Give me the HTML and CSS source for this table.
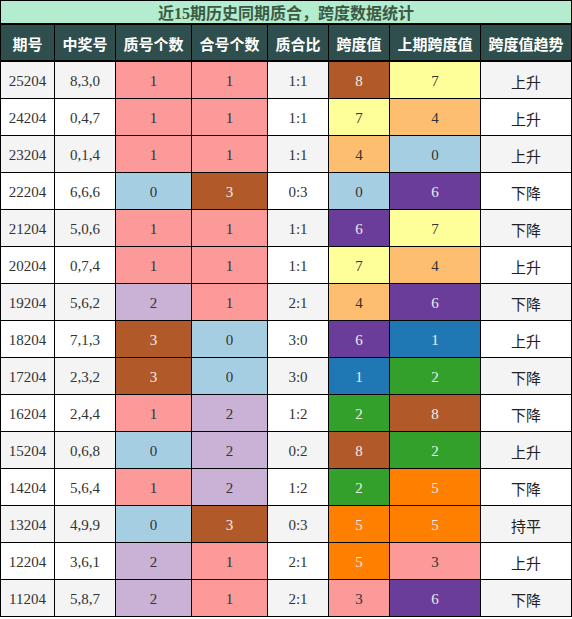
FILE: index.html
```html
<!DOCTYPE html>
<html lang="zh-CN">
<head>
<meta charset="utf-8">
<title>近15期历史同期质合，跨度数据统计</title>
<link rel="stylesheet" href="styles.css">
</head>
<body>
<div class="sheet">
  <div class="title">近15期历史同期质合，跨度数据统计</div>
  <div class="th">期号</div><div class="th">中奖号</div><div class="th">质号个数</div><div class="th">合号个数</div><div class="th">质合比</div><div class="th">跨度值</div><div class="th">上期跨度值</div><div class="th">跨度值趋势</div>

  <div class="td alt">25204</div><div class="td alt">8,3,0</div><div class="td n1">1</div><div class="td n1">1</div><div class="td alt">1:1</div><div class="td s8">8</div><div class="td s7">7</div><div class="td alt tr">上升</div>
  <div class="td">24204</div><div class="td">0,4,7</div><div class="td n1">1</div><div class="td n1">1</div><div class="td">1:1</div><div class="td s7">7</div><div class="td s4">4</div><div class="td tr">上升</div>
  <div class="td alt">23204</div><div class="td alt">0,1,4</div><div class="td n1">1</div><div class="td n1">1</div><div class="td alt">1:1</div><div class="td s4">4</div><div class="td s0">0</div><div class="td alt tr">上升</div>
  <div class="td">22204</div><div class="td">6,6,6</div><div class="td n0">0</div><div class="td n3">3</div><div class="td">0:3</div><div class="td s0">0</div><div class="td s6">6</div><div class="td tr">下降</div>
  <div class="td alt">21204</div><div class="td alt">5,0,6</div><div class="td n1">1</div><div class="td n1">1</div><div class="td alt">1:1</div><div class="td s6">6</div><div class="td s7">7</div><div class="td alt tr">下降</div>
  <div class="td">20204</div><div class="td">0,7,4</div><div class="td n1">1</div><div class="td n1">1</div><div class="td">1:1</div><div class="td s7">7</div><div class="td s4">4</div><div class="td tr">上升</div>
  <div class="td alt">19204</div><div class="td alt">5,6,2</div><div class="td n2">2</div><div class="td n1">1</div><div class="td alt">2:1</div><div class="td s4">4</div><div class="td s6">6</div><div class="td alt tr">下降</div>
  <div class="td">18204</div><div class="td">7,1,3</div><div class="td n3">3</div><div class="td n0">0</div><div class="td">3:0</div><div class="td s6">6</div><div class="td s1">1</div><div class="td tr">上升</div>
  <div class="td alt">17204</div><div class="td alt">2,3,2</div><div class="td n3">3</div><div class="td n0">0</div><div class="td alt">3:0</div><div class="td s1">1</div><div class="td s2">2</div><div class="td alt tr">下降</div>
  <div class="td">16204</div><div class="td">2,4,4</div><div class="td n1">1</div><div class="td n2">2</div><div class="td">1:2</div><div class="td s2">2</div><div class="td s8">8</div><div class="td tr">下降</div>
  <div class="td alt">15204</div><div class="td alt">0,6,8</div><div class="td n0">0</div><div class="td n2">2</div><div class="td alt">0:2</div><div class="td s8">8</div><div class="td s2">2</div><div class="td alt tr">上升</div>
  <div class="td">14204</div><div class="td">5,6,4</div><div class="td n1">1</div><div class="td n2">2</div><div class="td">1:2</div><div class="td s2">2</div><div class="td s5">5</div><div class="td tr">下降</div>
  <div class="td alt">13204</div><div class="td alt">4,9,9</div><div class="td n0">0</div><div class="td n3">3</div><div class="td alt">0:3</div><div class="td s5">5</div><div class="td s5">5</div><div class="td alt tr">持平</div>
  <div class="td">12204</div><div class="td">3,6,1</div><div class="td n2">2</div><div class="td n1">1</div><div class="td">2:1</div><div class="td s5">5</div><div class="td s3">3</div><div class="td tr">上升</div>
  <div class="td alt">11204</div><div class="td alt">5,8,7</div><div class="td n2">2</div><div class="td n1">1</div><div class="td alt">2:1</div><div class="td s3">3</div><div class="td s6">6</div><div class="td alt tr">下降</div>
</div>
</body>
</html>
```

FILE: styles.css
```css
html, body {
  margin: 0;
  padding: 0;
  background: #fff;
}

.sheet {
  display: grid;
  grid-template-columns: 53px 60px 75px 75px 60px 60px 90px 90px;
  grid-template-rows: 23px 36px repeat(15, 36px);
  gap: 1px;
  padding: 1px;
  width: 570px;
  background: #000;
  font-family: "Liberation Serif", "Noto Sans CJK SC", serif;
  font-size: 15px;
  color: #333;
}

.title {
  grid-column: 1 / -1;
  margin-bottom: 1px;
  background: #b3ecce;
  color: #3b5a45;
  font-family: "Liberation Serif", "Noto Sans CJK SC", sans-serif;
  font-weight: bold;
  font-size: 16px;
  display: flex;
  align-items: center;
  justify-content: center;
}

.th {
  margin-bottom: 1px;
  padding-top: 1px;
  background: #2f4f4f;
  color: #fff;
  font-family: "Noto Sans CJK SC", sans-serif;
  font-weight: bold;
  font-size: 15px;
  display: flex;
  align-items: center;
  justify-content: center;
}

.td {
  padding-top: 2px;
  background: #fff;
  display: flex;
  align-items: center;
  justify-content: center;
}

.td.alt { background: #f4f4f4; }

.tr {
  font-family: "Noto Sans CJK SC", sans-serif;
  color: #222;
}

/* count colors */
.n0 { background: #a6cee3; }
.n1 { background: #fb9a99; }
.n2 { background: #cab2d6; }
.n3 { background: #b15928; color: #eee; }

/* span colors */
.s0 { background: #a6cee3; }
.s1 { background: #1f78b4; color: #eee; }
.s2 { background: #33a02c; color: #eee; }
.s3 { background: #fb9a99; }
.s4 { background: #fdbf6f; }
.s5 { background: #ff7f00; color: #eee; }
.s6 { background: #6a3d9a; color: #eee; }
.s7 { background: #ffff99; }
.s8 { background: #b15928; color: #eee; }
```
